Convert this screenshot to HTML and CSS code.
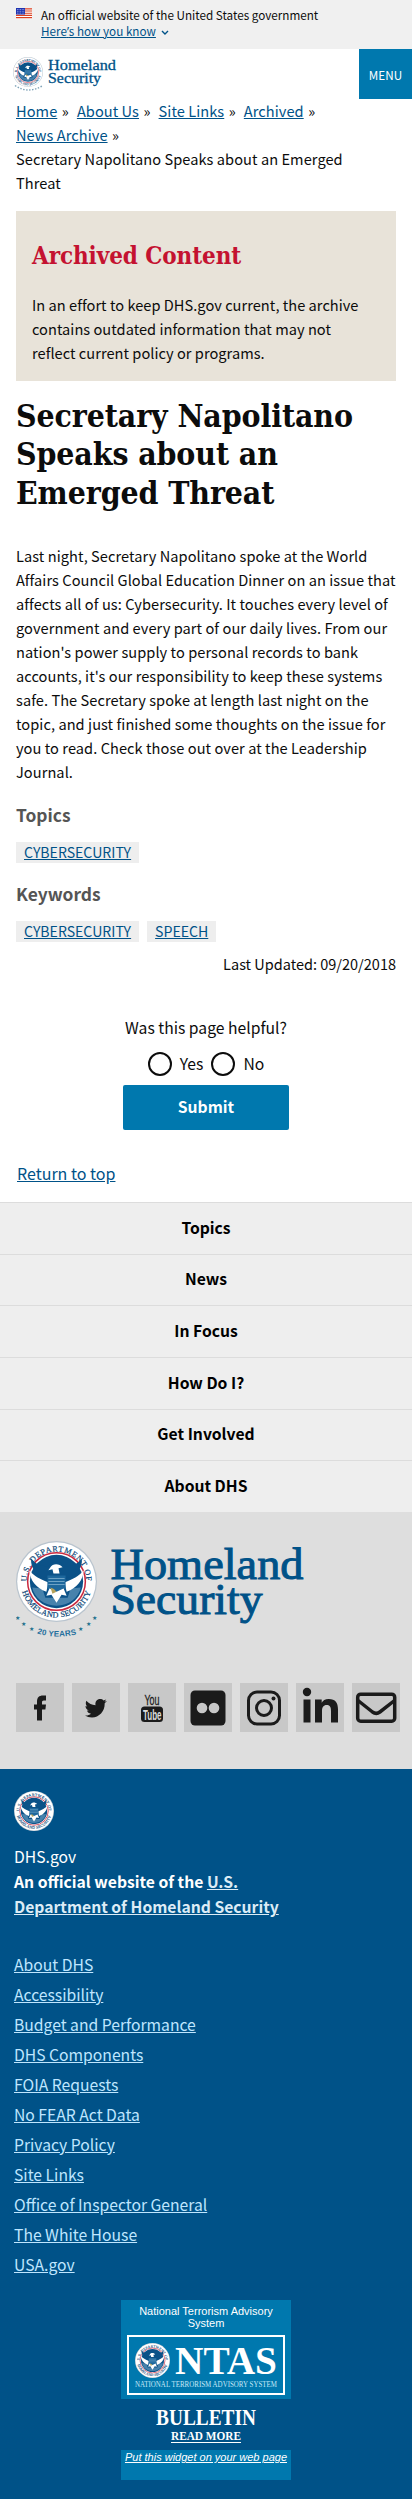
FILE: index.html
```html
<!DOCTYPE html>
<html lang="en">
<head>
<meta charset="utf-8">
<title>Secretary Napolitano Speaks about an Emerged Threat | Homeland Security</title>
<link rel="stylesheet" href="styles.css">
</head>
<body>
<svg class="defs" width="0" height="0">
  <symbol id="seal" viewBox="0 0 80 80">
    <circle cx="40" cy="40" r="40" fill="#b9c4ce"/>
    <circle cx="40" cy="40" r="38.8" fill="#fff"/>
    <path id="arcTop" d="M10.5 40a29.5 29.5 0 0 1 59 0" fill="none"/>
    <path id="arcBottom" d="M4.8 43a35.3 35.3 0 0 0 70.4 0" fill="none"/>
    <text class="seal-text"><textPath href="#arcTop" startOffset="0" textLength="92">U.S. DEPARTMENT OF</textPath></text>
    <text class="seal-text"><textPath href="#arcBottom" startOffset="7" textLength="91">HOMELAND SECURITY</textPath></text>
    <circle cx="40" cy="40" r="28.5" fill="#fff" stroke="#c9283e" stroke-width="1.5"/>
    <circle cx="40" cy="40" r="26.3" fill="#0b5288"/>
    <path d="M16 46l10 1 3 9h22l3-9 10-1c-2 10-12 18-24 18S18 56 16 46z" fill="#7aaacb" opacity=".55"/>
    <path d="M15 17c3 5 9 8 17 8 2-6 14-6 16 0 8 0 14-3 17-8 1 10-5 17-16 20H31C20 34 14 27 15 17z" fill="#0b5288"/>
    <path d="M13 29c5 6 11 9 19 12l-2 9C20 47 14 39 13 29zM67 29c-5 6-11 9-19 12l2 9c10-3 16-11 17-21z" fill="#fff"/>
    <path d="M34 26c2-4 9-4 12 0l-4 1 1 5h-6l-1-4-4 1z" fill="#fff"/>
    <path d="M31 34h18v12q-3 5-9 8-6-3-9-8z" fill="#1d679c"/>
    <path d="M32 37h16M32 40h16M32 43h16" stroke="#83b4d2" stroke-width=".8"/>
    <path d="M33 47l7 3 7-3 3 7-5-1-5 8-5-8-5 1z" fill="#fff"/>
    <path d="M34 46q4 1 6 4l-4 2z" fill="#b5a25b"/>
  </symbol>
</svg>

<div class="gov-banner">
  <svg class="flag" viewBox="0 0 16 11"><path fill="#fff" d="M0 0h16v11H0z"/><path d="M0 .8h16M0 3h16M0 5.2h16M0 7.4h16M0 9.6h16" stroke="#db3e1f" stroke-width="1.15"/><path fill="#1e33b1" d="M0 0h9v6.5H0z"/><path d="M1 1.5h8M1 3.3h8M1 5.1h8" stroke="#cfd3f2" stroke-width=".7" stroke-dasharray=".8 .8"/></svg>
  <div class="gov-text"><div>An official website of the United States government</div><a href="#">Here<span class="apos">’</span>s how you know</a><svg class="chevron" viewBox="0 0 8 5"><path d="M1 1l3 3 3-3" fill="none" stroke="#005288" stroke-width="1.4"/></svg></div>
</div>

<header class="site-header">
  <svg class="logo" viewBox="0 0 110 40">
    <use href="#seal" x="0" y="1" width="30" height="30"/>
    <path d="M2 29.5q13 9 28 0" fill="none" stroke="#7fa3b8" stroke-width="1.4" stroke-dasharray="1.5 1.5"/>
    <text class="logo-type small" x="35" y="14" font-size="15.5" textLength="68" lengthAdjust="spacingAndGlyphs">Homeland</text>
    <text class="logo-type small" x="35" y="27" font-size="15.5" textLength="53" lengthAdjust="spacingAndGlyphs">Security</text>
  </svg>
  <button class="menu">MENU</button>
</header>

<main class="content">
  <nav class="crumbs"><a href="#">Home</a><i>»</i><a href="#">About Us</a><i>»</i><a href="#">Site Links</a><i>»</i><a href="#">Archived</a><i>»</i><br><a href="#">News Archive</a><i>»</i><br><span>Secretary Napolitano Speaks about an Emerged<br>Threat</span></nav>

  <section class="archived">
    <h2>Archived Content</h2>
    <p>In an effort to keep DHS.gov current, the archive<br>contains outdated information that may not<br>reflect current policy or programs.</p>
  </section>

  <h1>Secretary Napolitano<br>Speaks about an<br>Emerged Threat</h1>

  <p class="body-copy">Last night, Secretary Napolitano spoke at the World<br>Affairs Council Global Education Dinner on an issue that<br>affects all of us: Cybersecurity. It touches every level of<br>government and every part of our daily lives. From our<br>nation's power supply to personal records to bank<br>accounts, it's our responsibility to keep these systems<br>safe. The Secretary spoke at length last night on the<br>topic, and just finished some thoughts on the issue for<br>you to read. Check those out over at the Leadership<br>Journal.</p>

  <h3>Topics</h3>
  <div class="tags"><a href="#">CYBERSECURITY</a></div>
  <h3>Keywords</h3>
  <div class="tags"><a href="#">CYBERSECURITY</a><a href="#">SPEECH</a></div>
  <p class="updated">Last Updated: 09/20/2018</p>

  <form class="feedback">
    <p>Was this page helpful?</p>
    <div class="choices"><span class="radio"></span><label>Yes</label><span class="radio second"></span><label>No</label></div>
    <button class="submit" type="button">Submit</button>
  </form>
  <a class="return" href="#">Return to top</a>
</main>

<nav class="footer-nav"><a>Topics</a><a>News</a><a>In Focus</a><a>How Do I?</a><a>Get Involved</a><a>About DHS</a></nav>

<section class="footer-brand">
  <svg class="brand" viewBox="0 0 300 104">
    <use href="#seal" x="0" y="0" width="81" height="81"/>
    <path id="years" d="M19 92q22 7 47 0" fill="none"/>
    <text class="years"><textPath href="#years" startOffset="2" textLength="40">20 YEARS</textPath></text>
    <g class="star"><text x="-1" y="79">★</text><text x="5" y="85">★</text><text x="13" y="90">★</text><text x="62" y="90">★</text><text x="70" y="85">★</text><text x="76" y="79">★</text></g>
    <text class="logo-type" x="94.500" y="38" font-size="45" textLength="193" lengthAdjust="spacingAndGlyphs">Homeland</text>
    <text class="logo-type" x="94.500" y="73" font-size="44" textLength="152" lengthAdjust="spacingAndGlyphs">Security</text>
  </svg>
  <div class="social">
    <svg viewBox="0 0 48 48"><path d="M21 37V26h-3v-5h3v-3c0-4 2-6 6-6h3v5h-2c-2 0-2 1-2 2v2h4l-.6 5H26v11z"/></svg>
    <svg viewBox="0 0 48 48"><path d="M35 17.500l-2.300 2.300C33 28 27 34 20 34c-3 0-5-.7-7-2 2.500.2 4.500-.5 6-1.800-2-.2-3.500-1.500-4-3.200h1.800c-2-.6-3.300-2.300-3.300-4.500l1.800.5c-1.500-1.200-2-3.600-1-5.800 2.500 2.800 5.500 4.300 9.200 4.500-.6-3.700 1.600-6.200 4.600-6.200 1.400 0 2.500.5 3.400 1.400l2.700-1-1.700 2.300z"/></svg>
    <svg viewBox="0 0 48 48"><text class="yt thin" x="16.500" y="21.500" font-size="15" textLength="15" lengthAdjust="spacingAndGlyphs">You</text><rect x="13" y="23" width="22" height="15.500" rx="3.500"/><text class="yt light" x="15" y="36" font-size="14" textLength="18.500" lengthAdjust="spacingAndGlyphs">Tube</text></svg>
    <svg viewBox="0 0 48 48"><rect x="6.500" y="7" width="35" height="35" rx="4.500"/><circle cx="18" cy="24.500" r="5.300" fill="#c8c8c8"/><circle cx="30" cy="24.500" r="5.300" fill="#c8c8c8"/></svg>
    <svg viewBox="0 0 48 48"><g fill="none" stroke="#1b1b1b" stroke-width="3"><rect x="8.500" y="8.500" width="31" height="32" rx="8.500"/><circle cx="24" cy="24.500" r="7.500"/></g><circle cx="33.500" cy="15" r="2"/></svg>
    <svg viewBox="0 0 48 48"><circle cx="11" cy="8.500" r="4.200"/><path d="M7.500 16h7v23h-7zM19 16h6.700v3.200c1.200-2.200 3.400-3.700 7-3.700 6.800 0 9.300 3.900 9.300 10.500v13h-7V27.500c0-3.500-.8-6-4.200-6-3.500 0-4.800 2.500-4.800 6V39h-7z"/></svg>
    <svg viewBox="0 0 48 48"><g fill="none" stroke="#1b1b1b" stroke-width="3.500" stroke-linejoin="round"><rect x="5.700" y="10.700" width="37" height="27" rx="3"/><path d="M6 17l14.500 11.500q3.700 2.800 7.400 0L42.500 17"/></g></svg>
  </div>
</section>

<footer class="identity">
  <svg class="small-seal" viewBox="0 0 80 80"><use href="#seal" width="80" height="80"/></svg>
  <p class="domain">DHS.gov</p>
  <p class="official">An official website of the <a href="#">U.S.<br>Department of Homeland Security</a></p>
  <ul class="links">
    <li><a href="#">About DHS</a></li><li><a href="#">Accessibility</a></li><li><a href="#">Budget and Performance</a></li><li><a href="#">DHS Components</a></li><li><a href="#">FOIA Requests</a></li><li><a href="#">No FEAR Act Data</a></li><li><a href="#">Privacy Policy</a></li><li><a href="#">Site Links</a></li><li><a href="#">Office of Inspector General</a></li><li><a href="#">The White House</a></li><li><a href="#">USA.gov</a></li>
  </ul>
  <div class="widget">
    <div class="ntas">
      <p>National Terrorism Advisory<br>System</p>
      <svg class="ntas-logo" viewBox="0 0 158 60">
        <rect x="1" y="1" width="156" height="58" fill="none" stroke="#fff" stroke-width="2"/>
        <use href="#seal" x="8" y="8" width="35" height="35"/>
        <text class="ntas-type" x="48" y="39" font-size="41" textLength="102" lengthAdjust="spacingAndGlyphs">NTAS</text>
        <text class="ntas-sub" x="8" y="52" font-size="8" textLength="142" lengthAdjust="spacingAndGlyphs">NATIONAL TERRORISM ADVISORY SYSTEM</text>
      </svg>
    </div>
    <svg class="bulletin" viewBox="0 0 170 51">
      <text class="ntas-type" x="35" y="26" font-size="23" textLength="100" lengthAdjust="spacingAndGlyphs">BULLETIN</text>
      <text class="ntas-type" x="50" y="41" font-size="13" textLength="70" lengthAdjust="spacingAndGlyphs">READ MORE</text>
      <path d="M50 43.500h70" stroke="#fff"/>
    </svg>
    <div class="embed"><a href="#">Put this widget on your web page</a></div>
  </div>
</footer>
</body>
</html>
```
FILE: styles.css
```css
* { box-sizing: border-box; }
body { margin: 0; background: #fff; color: #0c0c0c; font: 14.4px/24px "Noto Sans CJK SC", "Noto Sans", sans-serif; }
p, h1, h2, h3, ul { margin: 0; padding: 0; }
a { color: #005288; }
svg { display: block; }
.defs { position: absolute; }
.seal-text { font: 8px "Liberation Serif", serif; fill: #0b4778; stroke: #0b4778; stroke-width: .2px; }
.logo-type { font-family: "Liberation Serif", serif; fill: #005288; stroke: #005288; stroke-width: 1px; }
.logo-type.small { stroke-width: .3px; }

.gov-banner { height: 49px; background: #f0f0f0; padding: 8px 16px 0; display: flex; gap: 9px; }
.flag { width: 16px; height: 11px; }
.gov-text { font-size: 11.7px; line-height: 16px; white-space: nowrap; margin-top: -1px; }
.apos { font-family: "Open Sans", sans-serif; }
.chevron { display: inline-block; width: 8px; height: 5px; margin-left: 5px; vertical-align: 1px; }

.site-header { height: 50px; display: flex; justify-content: space-between; }
.logo { width: 110px; height: 40px; margin: 7px 0 0 13px; }
.menu { width: 53px; height: 50px; border: 0; padding: 0; background: #0078ae; color: #fff; font: 11.7px "Noto Sans CJK SC", sans-serif; }

.content { padding: 0 16px; height: 1103px; }
.crumbs { white-space: nowrap; height: 112px; letter-spacing: .06px; font-size: 14.6px; }
.crumbs i { font-style: normal; margin: 0 8px 0 4.500px; }
.archived { height: 170px; padding: 29px 16px 0; background: #e8e3d9; }
.archived h2 { color: #c41230; font: bold 24px/32px "DejaVu Serif Condensed", "DejaVu Serif", serif; height: 53px; letter-spacing: -.1px; }
.archived p, .body-copy { white-space: nowrap; font-size: 14.6px; letter-spacing: .06px; }
.archived p { letter-spacing: .03px; }
h1 { font: bold 31.700px/38.400px "DejaVu Serif Condensed", "DejaVu Serif", serif; margin-top: 16px; height: 147px; letter-spacing: -.1px; }
h3 { color: #555; font-size: 17.400px; line-height: 24px; margin-top: 19px; }
.tags { display: flex; gap: 8px; margin-top: 15px; height: 21px; font-size: 14.1px; }
.tags a { background: #eee; padding: 0 8px; line-height: 21px; }
.updated { text-align: right; margin-top: 10px; font-size: 14.5px; }
.feedback { display: flex; flex-direction: column; align-items: center; margin-top: 40px; font-size: 15.7px; }
.choices { display: flex; margin-top: 12px; }
.radio { width: 24px; height: 24px; border: 2px solid #0c0c0c; border-radius: 50%; margin-right: 8px; }
.radio.second { margin-left: 8px; }
.submit { width: 166px; height: 45px; margin-top: 9px; border: 0; border-radius: 2px; padding: 0 0 2px; background: #0078ae; color: #fff; font: bold 15.700px "Noto Sans CJK SC", sans-serif; }
.return { display: inline-block; margin: 31px 0 0 1px; font-size: 16px; }

.footer-nav { display: grid; grid-template-rows: repeat(6, 1fr); height: 310px; background: #eee; }
.footer-nav a { border-top: 1px solid #dcdcdc; padding-bottom: 1px; color: #000; font-weight: bold; font-size: 15.700px; display: grid; place-items: center; }

.footer-brand { height: 257px; background: #dedede; padding: 29px 12px 0 16px; }
.brand { width: 300px; height: 104px; }
.years { font: bold 8px "Liberation Sans", sans-serif; fill: #246f9d; }
.star { font: 6px "DejaVu Sans", sans-serif; fill: #25718c; }
.social { display: flex; gap: 8px; margin-top: 38px; }
.social svg { width: 48px; height: 49px; background: #c8c8c8; fill: #1b1b1b; }
.yt { font-family: "Liberation Sans", sans-serif; font-weight: bold; }
.thin { font-weight: normal; stroke: #1b1b1b; stroke-width: .3px; }
.light { fill: #ddd; }

.identity { height: 730px; padding: 22px 14px 0; background: #005288; color: #fff; font-size: 15.700px; line-height: 25px; }
.small-seal { width: 40px; height: 40px; margin-bottom: 13px; }
.official { font-weight: bold; }
.official a { color: #dcecf6; }
.links { list-style: none; margin-top: 31px; line-height: 30px; }
.links a { color: #bfe6ff; }
.widget { width: 170px; margin: 20px auto 0; font-family: "Liberation Sans", sans-serif; }
.ntas { background: #0078ae; height: 99px; padding-top: 5px; }
.ntas p { font-size: 11px; line-height: 12px; text-align: center; }
.ntas-logo { width: 158px; height: 60px; margin: 6px auto 0; }
.ntas-type { font-family: "Liberation Serif", serif; font-weight: bold; fill: #fff; }
.ntas-sub { font-family: "Liberation Serif", serif; fill: #c7e8f7; }
.bulletin { width: 170px; height: 51px; }
.embed { background: #0078ae; height: 30px; text-align: center; font-size: 11px; line-height: 14px; font-style: italic; white-space: nowrap; }
.embed a { color: #fff; }
```
